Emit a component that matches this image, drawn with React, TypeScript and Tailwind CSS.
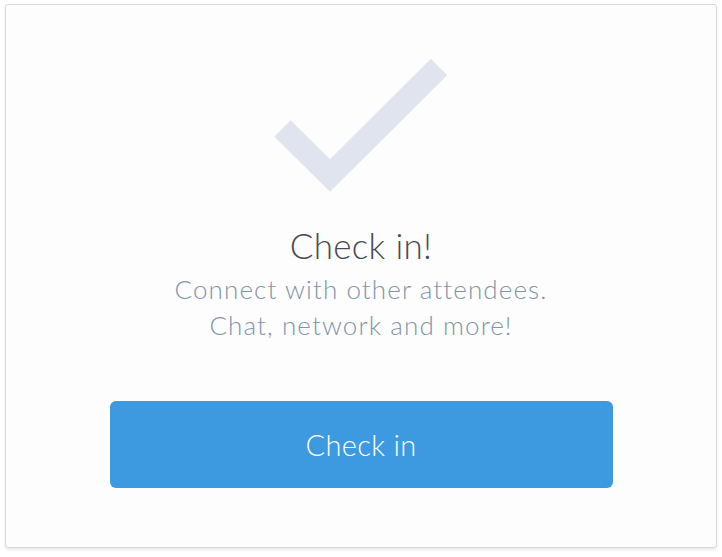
export default function App() {
  return (
    <div className="w-[722px] h-[557px] bg-white pt-[4px] px-[5px] font-['Lato','Open_Sans',sans-serif]">
      <div className="w-[712px] h-[544px] bg-[#fdfdfd] border border-[#d9d9d9] rounded-[3px] shadow-[0_2px_3px_rgba(0,0,0,0.08)] flex flex-col items-center pt-[45px]">
        <svg width="200" height="150" viewBox="0 0 200 150" className="shrink-0">
          <path d="M21.5 78.5 L69 125.5 L178 17" fill="none" stroke="#dfe4ee" strokeWidth="23" strokeLinejoin="miter" strokeLinecap="butt" />
        </svg>
        <h1 className="mt-[25px] text-[35px] leading-[40px] text-[#464b51] font-light tracking-[0.3px]">Check in!</h1>
        <p className="mt-[6px] text-[26px] leading-[36px] text-[#8194ab] text-center font-light tracking-[1.1px]">
          Connect with other attendees.
          <br />
          Chat, network and more!
        </p>
        <button className="mt-[58px] w-[503px] h-[87px] rounded-[6px] bg-[#3d9ae0] text-white text-[29px] font-light tracking-[0.3px]">
          Check in
        </button>
      </div>
    </div>
  );
}
